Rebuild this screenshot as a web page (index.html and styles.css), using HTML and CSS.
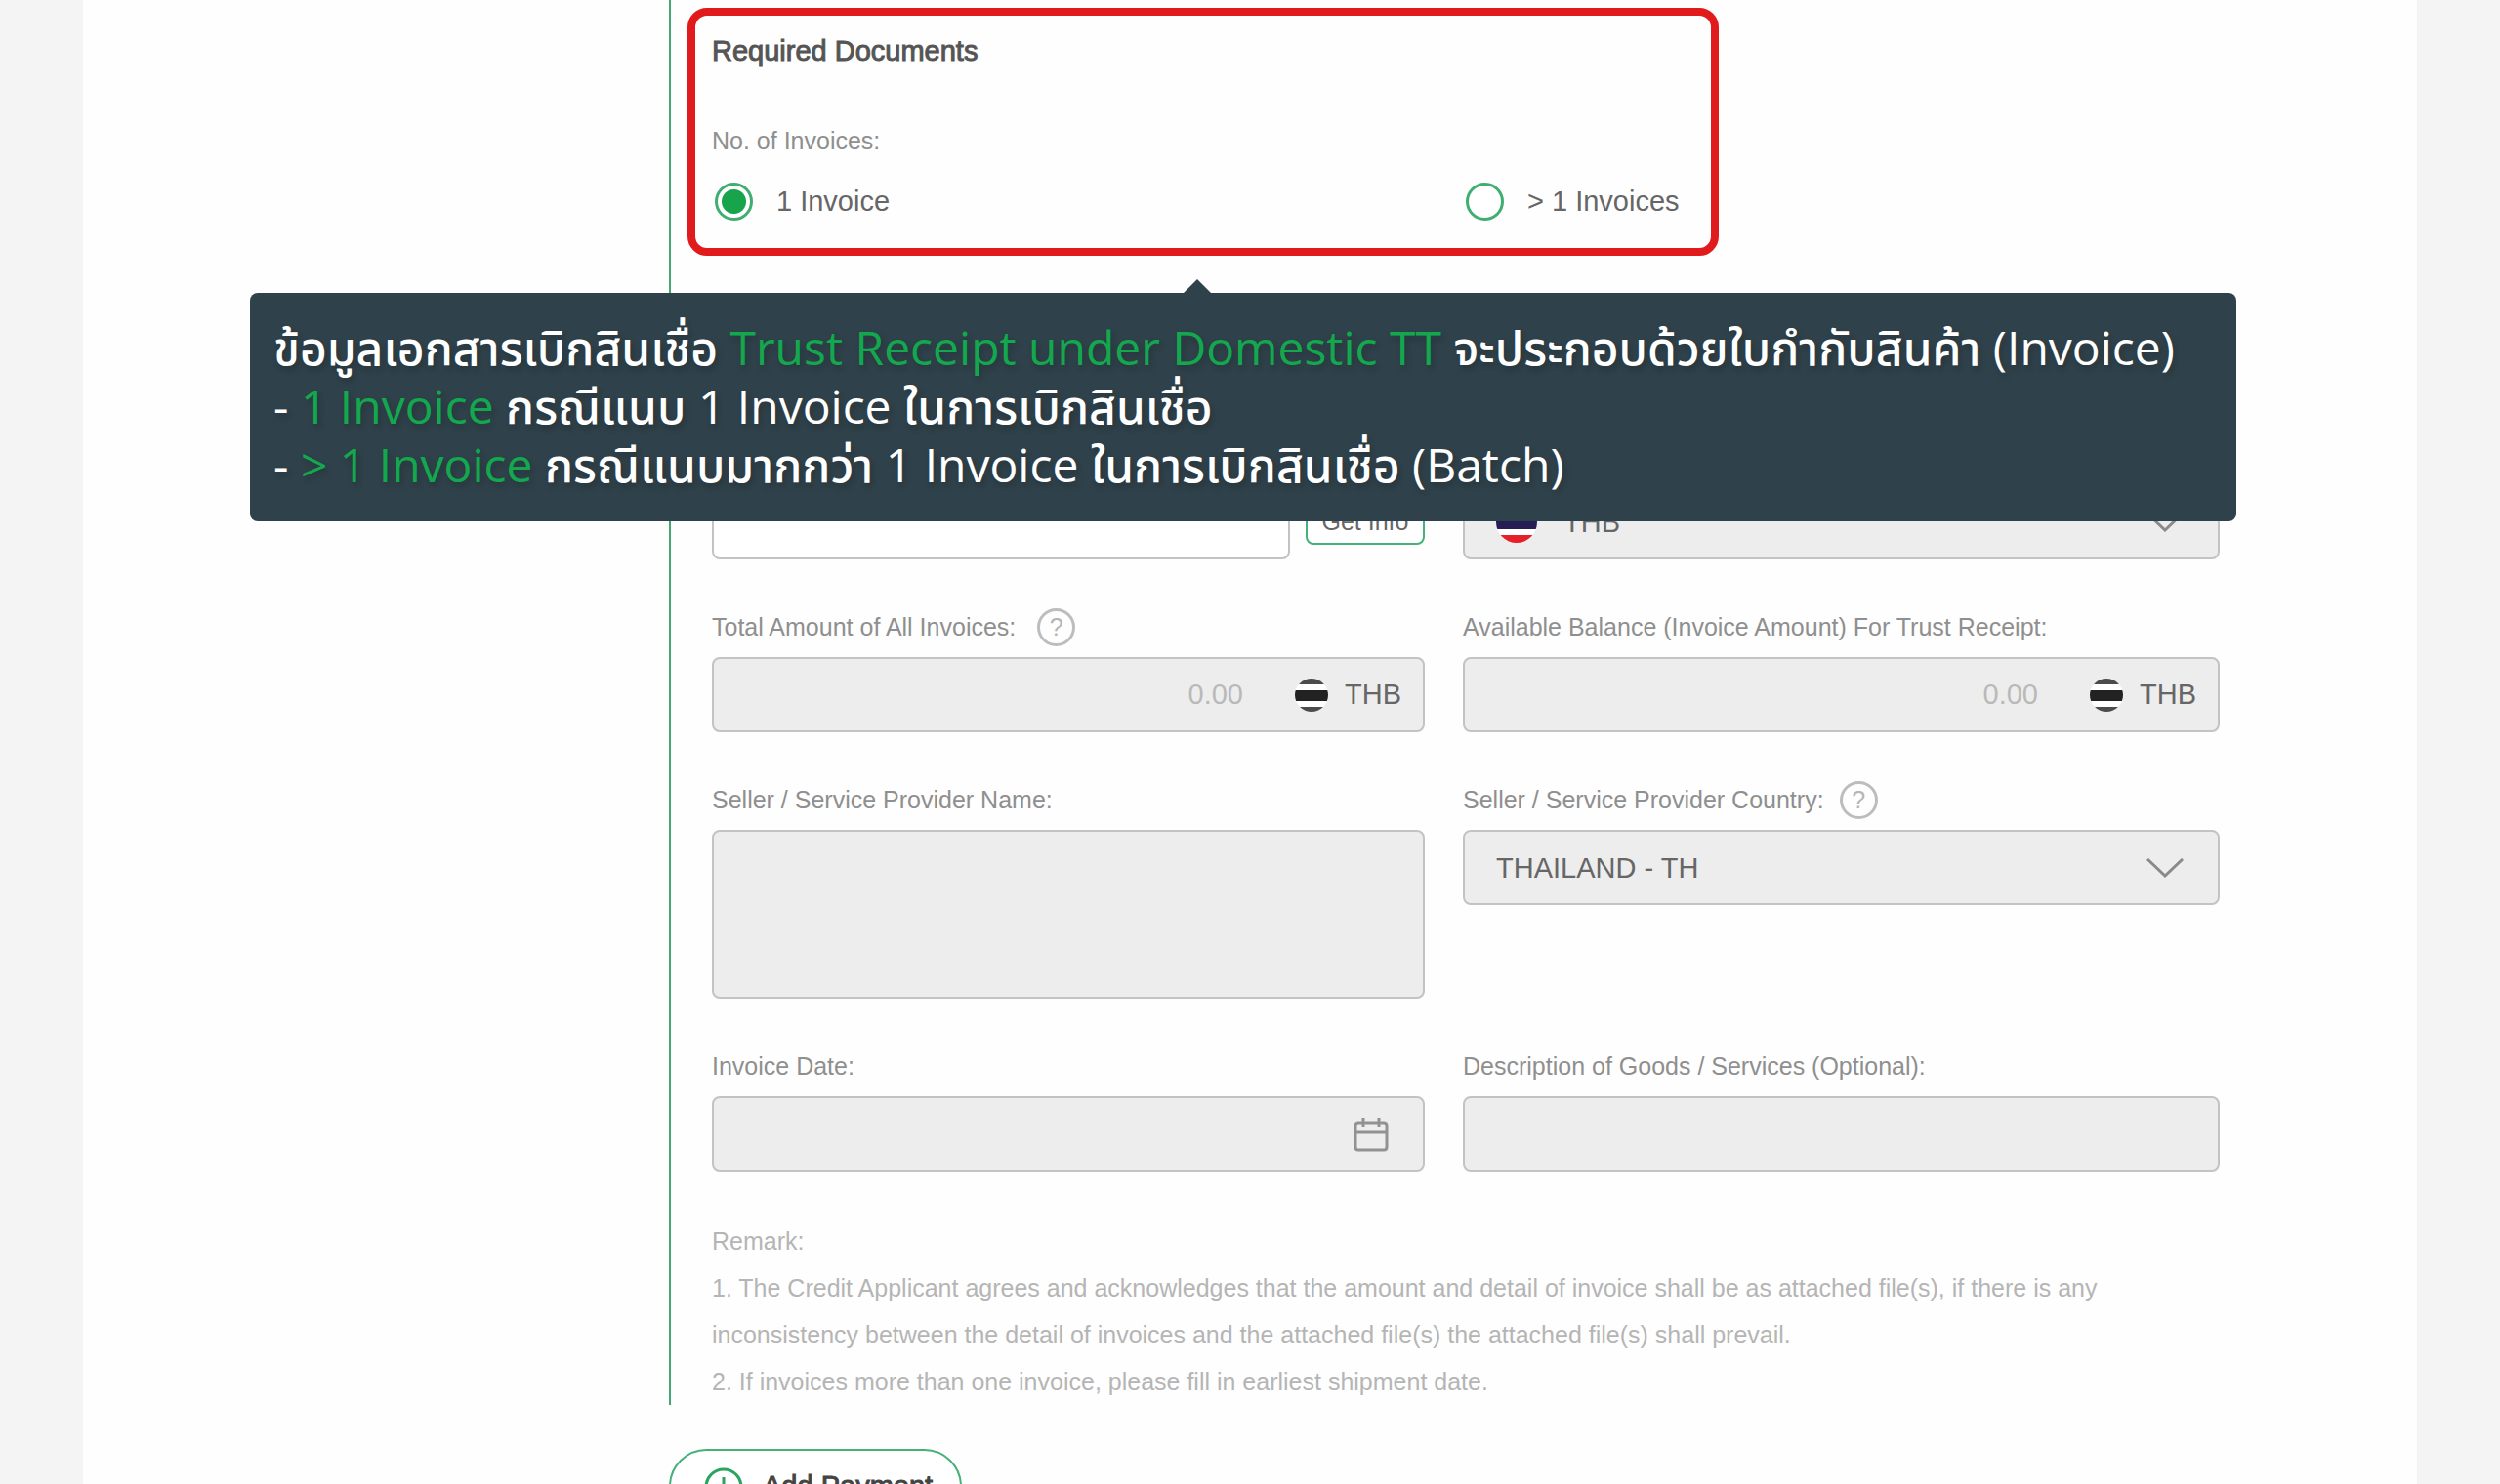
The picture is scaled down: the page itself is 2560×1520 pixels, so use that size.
FILE: index.html
```html
<!DOCTYPE html>
<html lang="en">
<head>
    <meta charset="UTF-8">
    <meta name="viewport" content="width=device-width, initial-scale=1.0">
    <title>Trust Receipt - Required Documents</title>
    <link rel="stylesheet" href="styles.css">
</head>
<body>
    <main class="page">
        <form class="panel">
            <!-- Required documents -->
            <section class="documents">
                <h2>Required Documents</h2>
                <div class="field-label" id="invoice-count">No. of Invoices:</div>
                <div class="columns" role="radiogroup" aria-labelledby="invoice-count">
                    <label class="radio"><input type="radio" name="invoices" checked> 1 Invoice</label>
                    <label class="radio"><input type="radio" name="invoices"> &gt; 1 Invoices</label>
                </div>
                <div class="highlight"></div>
            </section>

            <!-- Invoice details -->
            <section class="details columns">
                <div class="field no-label">
                    <div class="with-button">
                        <input type="text" class="control editable" aria-label="Invoice number">
                        <button type="button" class="info-button">Get Info</button>
                    </div>
                </div>
                <div class="field no-label">
                    <div class="control select-box">
                        <svg class="flag-large" viewBox="0 0 42 42" aria-hidden="true">
                            <clipPath id="round"><circle cx="21" cy="21" r="21"/></clipPath>
                            <g clip-path="url(#round)">
                                <rect width="42" height="42" fill="#fff"/>
                                <rect width="42" height="8" fill="#e5202b"/>
                                <rect y="14" width="42" height="14" fill="#251d54"/>
                                <rect y="34" width="42" height="8" fill="#e5202b"/>
                            </g>
                        </svg>
                        <select aria-label="Currency"><option>THB</option></select>
                        <svg class="chevron" viewBox="0 0 38 20" aria-hidden="true"><path d="M1 1l18 17L37 1"/></svg>
                    </div>
                </div>

                <div class="field">
                    <div class="field-label">
                        <label for="total">Total Amount of All Invoices:</label>
                        <button type="button" class="help help-far" aria-label="Help">?</button>
                    </div>
                    <div class="control amount">
                        <input type="text" id="total" placeholder="0.00">
                        <svg class="flag" viewBox="0 0 34 34" aria-hidden="true">
                            <clipPath id="round-small"><circle cx="17" cy="17" r="17"/></clipPath>
                            <g clip-path="url(#round-small)">
                                <rect width="34" height="34" fill="#fff"/>
                                <rect width="34" height="6" fill="#4c4c4c"/>
                                <rect y="12" width="34" height="11" fill="#222"/>
                                <rect y="29" width="34" height="6" fill="#4c4c4c"/>
                            </g>
                        </svg>
                        <span>THB</span>
                    </div>
                </div>
                <div class="field">
                    <div class="field-label">
                        <label for="balance">Available Balance (Invoice Amount) For Trust Receipt:</label>
                    </div>
                    <div class="control amount">
                        <input type="text" id="balance" placeholder="0.00">
                        <svg class="flag" viewBox="0 0 34 34" aria-hidden="true">
                            <g clip-path="url(#round-small)">
                                <rect width="34" height="34" fill="#fff"/>
                                <rect width="34" height="6" fill="#4c4c4c"/>
                                <rect y="12" width="34" height="11" fill="#222"/>
                                <rect y="29" width="34" height="6" fill="#4c4c4c"/>
                            </g>
                        </svg>
                        <span>THB</span>
                    </div>
                </div>

                <div class="field">
                    <div class="field-label"><label for="seller">Seller / Service Provider Name:</label></div>
                    <textarea id="seller" class="control"></textarea>
                </div>
                <div class="field">
                    <div class="field-label">
                        <label for="country">Seller / Service Provider Country:</label>
                        <button type="button" class="help" aria-label="Help">?</button>
                    </div>
                    <div class="control select-box">
                        <select id="country"><option>THAILAND - TH</option></select>
                        <svg class="chevron" viewBox="0 0 38 20" aria-hidden="true"><path d="M1 1l18 17L37 1"/></svg>
                    </div>
                </div>

                <div class="field">
                    <div class="field-label"><label for="date">Invoice Date:</label></div>
                    <div class="control date-box">
                        <input type="text" id="date">
                        <button type="button" class="calendar" aria-label="Choose date">
                            <svg viewBox="0 0 36 36"><path d="M5 6h26q3 0 3 3v22q0 3-3 3H5q-3 0-3-3V9q0-3 3-3zM2 15h32M10 1v9M26 1v9"/></svg>
                        </button>
                    </div>
                </div>
                <div class="field">
                    <div class="field-label"><label for="description">Description of Goods / Services (Optional):</label></div>
                    <input type="text" id="description" class="control">
                </div>
            </section>

            <div class="remark">
                <p>Remark:</p>
                <p>1. The Credit Applicant agrees and acknowledges that the amount and detail of invoice shall be as attached file(s), if there is any inconsistency between the detail of invoices and the attached file(s) the attached file(s) shall prevail.</p>
                <p>2. If invoices more than one invoice, please fill in earliest shipment date.</p>
            </div>
        </form>

        <button type="button" class="add-button">
            <svg viewBox="0 0 40 40" aria-hidden="true"><circle cx="20" cy="20" r="18"/><path d="M20 10v20M10 20h20"/></svg>
            Add Payment
        </button>

        <!-- Guide tooltip -->
        <div class="tooltip" role="note" lang="th">
            <p>ข้อมูลเอกสารเบิกสินเชื่อ <em>Trust Receipt under Domestic TT</em> จะประกอบด้วยใบกำกับสินค้า (Invoice)</p>
            <p>- <em>1 Invoice</em> กรณีแนบ 1 Invoice ในการเบิกสินเชื่อ</p>
            <p>- <em>&gt; 1 Invoice</em> กรณีแนบมากกว่า 1 Invoice ในการเบิกสินเชื่อ (Batch)</p>
        </div>
    </main>
</body>
</html>
```
FILE: styles.css
```css
* {
    box-sizing: border-box;
}
body {
    margin: 0;
    height: 100vh;
    overflow: hidden;
    background: #f4f4f4;
    color: #666;
    font-family: "Liberation Sans", Arial, sans-serif;
    font-size: 29px;
}
input, select, textarea, button {
    font: inherit;
    color: inherit;
}
p {
    margin: 0;
}
.page {
    position: relative;
    margin: 0 85px;
    padding: 0 202px 48px 600px;
    background: #fefefe;
}
.panel {
    padding: 33px 0 0 42px;
    border-left: 2px solid #45a673;
}
.columns {
    display: grid;
    grid-template-columns: 730fr 775fr;
    column-gap: 39px;
}

/* Required documents */
.documents {
    position: relative;
}
.documents h2 {
    margin: 0 0 53px;
    color: #555;
    font-size: 29px;
    font-weight: normal;
    line-height: 39px;
    -webkit-text-stroke: 1px #555;
}
.documents .field-label {
    margin-bottom: 23px;
}
.highlight {
    position: absolute;
    top: -25px;
    right: 513px;
    bottom: -36px;
    left: -25px;
    border: 8px solid #e11b1c;
    border-radius: 20px;
    pointer-events: none;
}
.radio {
    display: flex;
    align-items: center;
    gap: 24px;
    height: 39px;
    padding-left: 3px;
}
.radio input {
    appearance: none;
    width: 39px;
    height: 39px;
    margin: 0;
    border: 3px solid #3fae70;
    border-radius: 50%;
    background: #fff;
}
.radio input:checked {
    background: radial-gradient(circle, #17a44b 12px, #fff 13px);
}

/* Invoice details */
.details {
    row-gap: 50px;
    margin-top: 270px;
}
.field-label {
    display: flex;
    align-items: center;
    gap: 16px;
    height: 39px;
    margin-bottom: 11px;
    color: #8f8f8f;
    font-size: 25px;
}
.control {
    display: flex;
    align-items: center;
    width: 100%;
    height: 77px;
    margin: 0;
    border: 2px solid #c3c3c3;
    border-radius: 8px;
    background: #ededed;
}
.control input, .control select {
    appearance: none;
    flex: 1;
    min-width: 0;
    height: 100%;
    padding: 0;
    border: 0;
    background: none;
}
.editable {
    flex: 1;
    background: #fff;
}
textarea.control {
    display: block;
    height: 173px;
    resize: none;
}
.with-button {
    display: flex;
    align-items: center;
    gap: 16px;
}
.info-button {
    width: 122px;
    height: 47px;
    padding: 0;
    border: 2px solid #45b077;
    border-radius: 8px;
    background: #fff;
    font-size: 25px;
}
.help {
    width: 39px;
    height: 39px;
    padding: 0;
    border: 3px solid #bdbdbd;
    border-radius: 50%;
    background: none;
    color: #b5b5b5;
    font-size: 25px;
    line-height: 33px;
}
.help-far {
    margin-left: 6px;
}
.select-box {
    padding: 0 35px 0 32px;
}
.flag-large {
    width: 42px;
    height: 42px;
    margin-right: 27px;
}
.chevron {
    width: 38px;
    height: 20px;
    fill: none;
    stroke: #8a8a8a;
    stroke-width: 3;
}
.amount {
    padding-right: 22px;
}
.amount input {
    padding-right: 53px;
    text-align: right;
}
.amount input::placeholder {
    color: #b9b9b9;
    opacity: 1;
}
.flag {
    width: 34px;
    height: 34px;
    margin-right: 17px;
}
.date-box {
    padding-right: 35px;
}
.calendar {
    width: 36px;
    height: 36px;
    padding: 0;
    border: 0;
    background: none;
}
.calendar svg {
    display: block;
    fill: none;
    stroke: #929292;
    stroke-width: 3;
}

.remark {
    margin-top: 47px;
    color: #b5b5b5;
    font-size: 25px;
    line-height: 48px;
}
.add-button {
    display: flex;
    align-items: center;
    gap: 20px;
    height: 77px;
    margin-top: 45px;
    padding: 0 28px 0 34px;
    border: 2px solid #45b077;
    border-radius: 39px;
    background: #fff;
    color: #444;
    -webkit-text-stroke: 1px #444;
}
.add-button svg {
    width: 40px;
    height: 40px;
    fill: none;
    stroke: #2aa55f;
    stroke-width: 3;
}

/* Guide tooltip */
.tooltip {
    position: absolute;
    top: 300px;
    right: 185px;
    left: 171px;
    padding: 26px 24px 28px;
    border-radius: 8px;
    background: #2f414a;
    color: #fff;
    font-family: "Open Sans", "Noto Sans Thai", sans-serif;
    font-size: 48px;
    font-weight: 500;
    line-height: 60px;
    text-shadow: 2px 4px 6px rgba(0, 0, 0, 0.2);
}
.tooltip::before {
    content: "";
    position: absolute;
    top: -14px;
    left: 956px;
    border: 14px solid transparent;
    border-top: 0;
    border-bottom-color: #2f414a;
}
.tooltip em {
    color: #13a84e;
    font-style: normal;
}
```
